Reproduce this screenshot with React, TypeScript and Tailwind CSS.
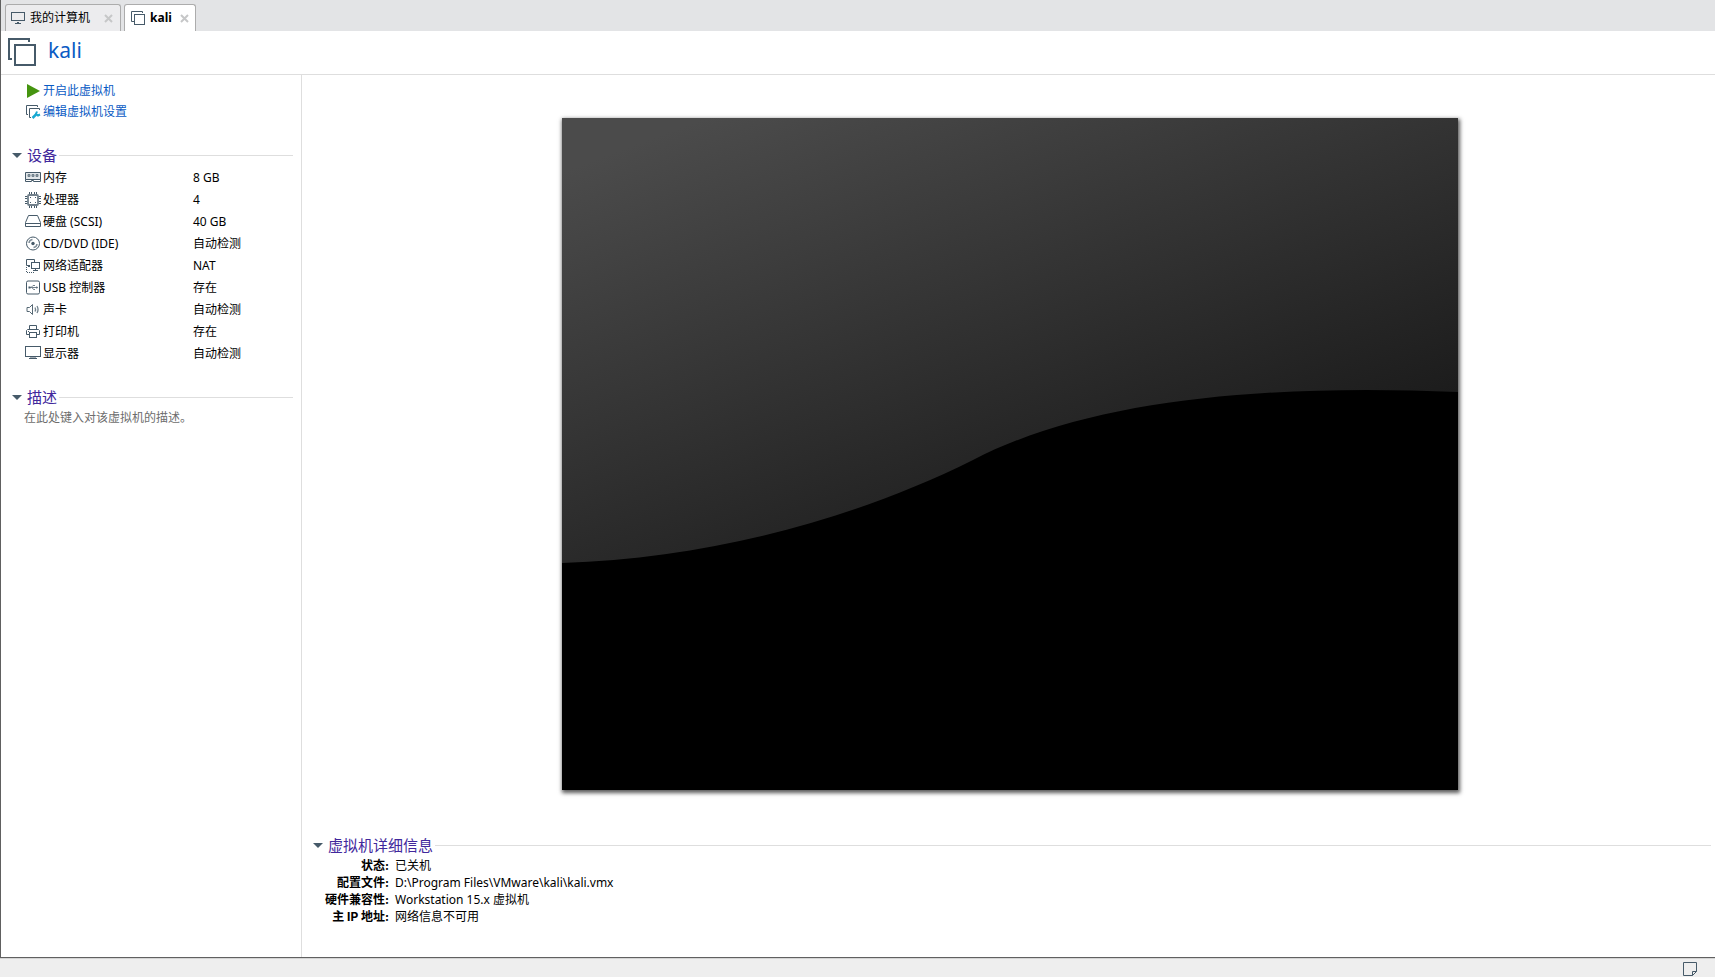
import React, { useState } from "react";

// 图标统一的描边颜色
const stroke = "#465a69";

interface Device {
  name: string;
  value: string;
  icon: React.ReactNode;
}

interface DetailRow {
  label: string;
  value: string;
}

// --- 图标 ---

function Icon({ children }: { children: React.ReactNode }) {
  return (
    <svg width="16" height="16" viewBox="0 0 16 16" fill="none" stroke={stroke} className="shrink-0" aria-hidden="true">
      {children}
    </svg>
  );
}

function VmIcon() {
  return (
    <Icon>
      <path d="M4 11.5H1.5V1.5H12.5V3" />
      <rect x="4.5" y="4.5" width="10" height="10" />
    </Icon>
  );
}

const devices: Device[] = [
  {
    name: "内存",
    value: "8 GB",
    icon: (
      <Icon>
        <path d="M.5 2.500h15v7H.5z" fill="#e3e7ea" />
        <path d="M.5 9.500v2h6v-1h2v1h7v-2" />
        <path d="M3 4.500h2v2H3zM7 4.500h2v2H7zM11 4.500h2v2h-2z" fill="#8b98a2" stroke="#71808b" />
      </Icon>
    ),
  },
  {
    name: "处理器",
    value: "4",
    icon: (
      <Icon>
        <path d="M4.500 0v2.500M6.500 0v2.500M9.500 0v2.500M11.500 0v2.500M4.500 13.500V16M6.500 13.500V16M9.500 13.500V16M11.500 13.500V16M0 4.500h2.500M0 6.500h2.500M0 9.500h2.500M0 11.500h2.500M13.500 4.500H16M13.500 6.500H16M13.500 9.500H16M13.500 11.500H16" />
        <rect x="3" y="3" width="10" height="10" rx="1" stroke="#71808b" strokeWidth="1.800" />
        <path d="M5 5h1v1H5zM10 10h1v1h-1zM5 10h1v1H5zM10 5h1v1h-1z" fill={stroke} stroke="none" />
      </Icon>
    ),
  },
  {
    name: "硬盘 (SCSI)",
    value: "40 GB",
    icon: (
      <Icon>
        <path d="M3.500 1.500h9l3 7v4H.5v-4zM.5 9.500h15" />
      </Icon>
    ),
  },
  {
    name: "CD/DVD (IDE)",
    value: "自动检测",
    icon: (
      <Icon>
        <circle cx="8" cy="7.500" r="6.500" />
        <circle cx="8" cy="7.500" r="1.700" fill={stroke} stroke="none" />
        <path d="M4 7A4 4 0 0 1 7.500 3.500M12 8A4 4 0 0 1 8.500 11.500" stroke="#7e8c97" strokeWidth="1.500" />
      </Icon>
    ),
  },
  {
    name: "网络适配器",
    value: "NAT",
    icon: (
      <Icon>
        <path d="M5 7.500H1.500v-6h8V4M3 8.500h2" />
        <rect x="6.500" y="4.500" width="8" height="6" fill="#fff" />
        <path d="M10.500 10.500v2M8 12.500h5" />
        <path d="M1.500 9v5.500H10" strokeDasharray="1 1" />
      </Icon>
    ),
  },
  {
    name: "USB 控制器",
    value: "存在",
    icon: (
      <Icon>
        <rect x="1.500" y="1" width="13" height="13" rx="1.500" />
        <path d="M4 7.500h8M6 7.500l2-2h2M7 7.500l1.500 2H10" stroke="#71808b" />
        <path d="M3.500 6.500h2v2h-2zM11.500 6l1.500 1.500L11.500 9z" fill={stroke} stroke="none" />
      </Icon>
    ),
  },
  {
    name: "声卡",
    value: "自动检测",
    icon: (
      <Icon>
        <path d="M2 5.500h2.500L7.500 2.500v10l-3-3H2z" stroke="#566874" />
        <path d="M10 5.500c.7 1.200.7 2.800 0 4M12 4c1.200 2 1.200 5 0 7" stroke="#71808b" strokeWidth="1.300" />
      </Icon>
    ),
  },
  {
    name: "打印机",
    value: "存在",
    icon: (
      <Icon>
        <path d="M4.500 5.500v-4h7v4M4 10.500H1.500v-4l1-1h11l1 1v4H12" />
        <rect x="4.500" y="8.500" width="7" height="5" />
        <path d="M3 7.500h1" />
      </Icon>
    ),
  },
  {
    name: "显示器",
    value: "自动检测",
    icon: (
      <Icon>
        <rect x=".5" y=".5" width="15" height="10" />
        <path d="M4 12.500h8" />
        <path d="M5 11.500h6" stroke="#a3adb4" />
      </Icon>
    ),
  },
];

const details: DetailRow[] = [
  { label: "状态:", value: "已关机" },
  { label: "配置文件:", value: "D:\\Program Files\\VMware\\kali\\kali.vmx" },
  { label: "硬件兼容性:", value: "Workstation 15.x 虚拟机" },
  { label: "主 IP 地址:", value: "网络信息不可用" },
];

// 标签页上的关闭按钮
function CloseButton({ label }: { label: string }) {
  return (
    <button type="button" aria-label={label}>
      <svg width="9" height="9" viewBox="0 0 9 9" stroke="#c6c7c8" strokeWidth="2" aria-hidden="true">
        <path d="M1 1l7 7M8 1L1 8" />
      </svg>
    </button>
  );
}

interface SectionProps {
  title: string;
  children: React.ReactNode;
}

// 可折叠的分组，标题右侧带一条横线
function Section({ title, children }: SectionProps) {
  const [open, setOpen] = useState(true);

  return (
    <section>
      <h2 className="flex h-[22px] items-center pl-[11px]">
        <button
          type="button"
          aria-expanded={open}
          onClick={() => setOpen(!open)}
          className="flex items-center gap-[5px] text-[15px] leading-[22px] text-[#41289c]"
        >
          <svg width="10" height="6" viewBox="0 0 10 6" fill={stroke} className={open ? "" : "-rotate-90"} aria-hidden="true">
            <path d="M0 1h10L5 6z" />
          </svg>
          {title}
        </button>
        <span className="ml-[2px] h-px flex-1 bg-[#dedede]" />
      </h2>
      {open && <div className="pt-px">{children}</div>}
    </section>
  );
}

// 关机状态下的虚拟机屏幕
function ScreenPreview() {
  return (
    <svg
      viewBox="0 0 896 672"
      className="aspect-[4/3] h-full bg-black shadow-[1px_2px_4px_1px_rgba(0,0,0,0.65)]"
      role="img"
      aria-label="kali"
    >
      <defs>
        <linearGradient id="gloss" gradientUnits="userSpaceOnUse" x1="18" y1="47" x2="200" y2="534">
          <stop offset="0" stopColor="#4b4b4b" />
          <stop offset="1" stopColor="#1c1c1c" />
        </linearGradient>
      </defs>
      <path d="M0 0H896V274C710 266 530 280 411 342C295 400 150 440 0 445Z" fill="url(#gloss)" />
    </svg>
  );
}

export default function App() {
  const [description, setDescription] = useState("");

  return (
    <div className="flex h-screen flex-col bg-[#eeeeee] font-['Noto_Sans','Noto_Sans_CJK_SC',sans-serif] text-[12px] text-black">
      <div className="flex min-h-0 flex-1 flex-col border-b border-l border-[#606060] bg-white">
        {/* 标签栏 */}
        <nav className="flex h-[31px] items-end gap-[3px] bg-[#e3e4e6] pl-1">
          <div className="flex h-[27px] items-center rounded-t-[3px] border border-b-0 border-[#acacac] bg-[#ececee] pr-[7px] pl-1">
            <button type="button" className="flex items-center gap-1">
              <Icon>
                <rect x="1.500" y="2.500" width="13" height="8" />
                <path d="M7 12.500h2M5 13.500h6" />
              </Icon>
              我的计算机
            </button>
            <span className="ml-[14px] flex">
              <CloseButton label="关闭 我的计算机" />
            </span>
          </div>
          <div className="flex h-[27px] items-center rounded-t-[3px] border border-b-0 border-[#acacac] bg-white pr-[6px] pl-[5px]">
            <button type="button" className="flex items-center gap-1 font-bold">
              <VmIcon />
              kali
            </button>
            <span className="ml-[8px] flex">
              <CloseButton label="关闭 kali" />
            </span>
          </div>
        </nav>

        <header className="flex h-[44px] items-center border-b border-[#dedede] pb-[2px] pl-[7px]">
          <svg width="28" height="28" viewBox="0 0 28 28" fill="none" stroke={stroke} strokeWidth="2" aria-hidden="true">
            <path d="M4 21H1V1H21V4" />
            <rect x="7" y="7" width="20" height="20" />
          </svg>
          <h1 className="ml-3 pb-1 text-[21px] leading-[28px] text-[#0a5bc4]">kali</h1>
        </header>

        <div className="flex min-h-0 flex-1">
          <aside className="flex w-[301px] shrink-0 flex-col gap-[21px] border-r border-[#dedede] pt-[5px] pr-[8px]">
            <div className="flex flex-col items-start pb-px pl-[24px] text-[#0a5bc4]">
              <a href="#power-on" className="flex h-[21px] items-center gap-[2px]">
                <svg width="16" height="16" viewBox="0 0 16 16" fill="#45940f" aria-hidden="true">
                  <path d="M2 1l13 7-13 7z" />
                </svg>
                开启此虚拟机
              </a>
              <a href="#settings" className="flex h-[21px] items-center gap-[2px]">
                <Icon>
                  <path d="M3 10.500H1.500v-9h11V3M6 13.500H4.500v-9h10V6" />
                  <path d="M7.500 14l4-4" stroke="#18a9d1" strokeWidth="2.500" />
                  <path d="M12 7.500l-1 2.500 2 1.500 2-1" stroke="#18a9d1" strokeWidth="2" />
                </Icon>
                编辑虚拟机设置
              </a>
            </div>

            <Section title="设备">
              <table className="w-full">
                <tbody>
                  {devices.map((device) => (
                    <tr key={device.name} className="h-[22px]">
                      <th scope="row" className="w-[192px] p-0 pl-[24px] text-left font-normal">
                        <span className="flex items-center gap-[2px]">
                          {device.icon}
                          {device.name}
                        </span>
                      </th>
                      <td className="p-0">{device.value}</td>
                    </tr>
                  ))}
                </tbody>
              </table>
            </Section>

            <Section title="描述">
              <textarea
                aria-label="描述"
                rows={1}
                value={description}
                onChange={(e) => setDescription(e.target.value)}
                placeholder="在此处键入对该虚拟机的描述。"
                className="block w-full resize-none overflow-hidden pl-[23px] leading-[18px] outline-none placeholder:text-[#6d6d6d]"
              />
            </Section>
          </aside>

          <main className="flex min-w-0 flex-1 flex-col pr-1 pb-8">
            <div className="flex min-h-0 flex-1 justify-center pt-[43px] pb-[44px] pl-[7px]">
              <ScreenPreview />
            </div>
            <Section title="虚拟机详细信息">
              <dl className="grid grid-cols-[max-content_1fr] gap-x-[6px] pl-[23px] leading-[17px]">
                {details.map((row) => (
                  <React.Fragment key={row.label}>
                    <dt className="text-right font-['Inter','Noto_Sans_CJK_SC',sans-serif] font-bold">{row.label}</dt>
                    <dd>{row.value}</dd>
                  </React.Fragment>
                ))}
              </dl>
            </Section>
          </main>
        </div>
      </div>

      {/* 状态栏 */}
      <footer className="flex h-[19px] shrink-0 items-center justify-end border-t border-[#d4d4d4] pt-[2px] pr-[17px]">
        <button type="button" aria-label="消息日志">
          <Icon>
            <path d="M10.500 14.500h-9v-13h13v9h-4zM10.500 14.500l4-4" />
          </Icon>
        </button>
      </footer>
    </div>
  );
}
